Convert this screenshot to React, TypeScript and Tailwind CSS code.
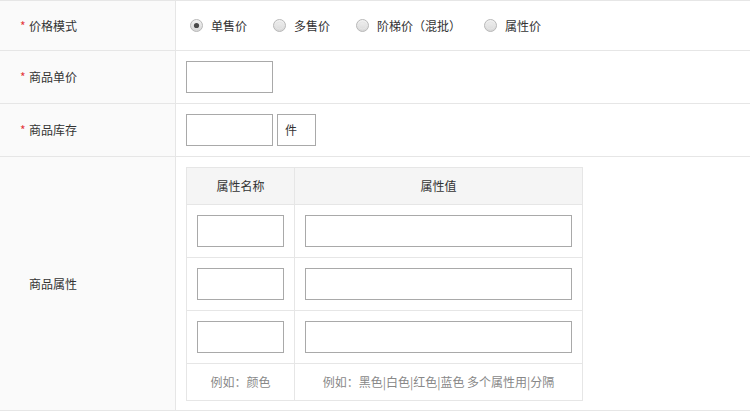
import React from "react";

const FONT = { fontFamily: '"Noto Sans CJK SC", "Liberation Sans", sans-serif' };

function Radio({ checked }: { checked?: boolean }) {
  return (
    <svg width="13" height="13" viewBox="0 0 13 13" className="shrink-0">
      <defs>
        <linearGradient id={checked ? "rgc" : "rgu"} x1="0" y1="0" x2="0" y2="1">
          <stop offset="0" stopColor="#f4f4f4" />
          <stop offset="1" stopColor="#d6d6d6" />
        </linearGradient>
      </defs>
      <circle cx="6.5" cy="6.5" r="6" fill={`url(#${checked ? "rgc" : "rgu"})`} stroke="#b8b8b8" strokeWidth="1" />
      {checked ? (
        <circle cx="6.5" cy="6.5" r="2.6" fill="#4a4a4a" />
      ) : (
        <circle cx="6.5" cy="6.5" r="3.5" fill="none" stroke="#e6e6e6" strokeWidth="1" />
      )}
    </svg>
  );
}

function Label({ text, required }: { text: string; required?: boolean }) {
  return (
    <div className="w-[176px] shrink-0 border-r border-[#e6e6e6] bg-[#fafafa] flex items-center pl-[20px] text-[#333]">
      <span className="inline-block w-[9px] text-[#e4393c] text-[12px] leading-none">{required ? "*" : ""}</span>
      <span>{text}</span>
    </div>
  );
}

function Input({ w }: { w: string }) {
  return <div className={`${w} h-[32px] border border-[#a9a9a9] bg-white`} />;
}

export default function App() {
  const radios = [
    { t: "单售价", c: true, m: "mr-[26px]" },
    { t: "多售价", m: "mr-[26px]" },
    { t: "阶梯价（混批）", m: "mr-[23px]" },
    { t: "属性价", m: "mr-[26px]" },
  ];
  return (
    <div className="w-[750px] h-[415px] bg-white text-[12px] text-[#333] overflow-hidden" style={FONT}>
      <div className="border-t border-[#e6e6e6]">
        <div className="flex h-[50px] border-b border-[#e6e6e6]">
          <Label text="价格模式" required />
          <div className="flex-1 flex items-center pl-[14px]">
            {radios.map((r) => (
              <div key={r.t} className={`flex items-center ${r.m}`}>
                <Radio checked={r.c} />
                <span className="ml-[8px] whitespace-nowrap">{r.t}</span>
              </div>
            ))}
          </div>
        </div>
        <div className="flex h-[53px] border-b border-[#e6e6e6]">
          <Label text="商品单价" required />
          <div className="flex-1 flex items-center pl-[10px]">
            <Input w="w-[87px]" />
          </div>
        </div>
        <div className="flex h-[53px] border-b border-[#e6e6e6]">
          <Label text="商品库存" required />
          <div className="flex-1 flex items-center pl-[10px] gap-[4px]">
            <Input w="w-[87px]" />
            <div className="w-[39px] h-[32px] border border-[#a9a9a9] flex items-center pl-[7px]">件</div>
          </div>
        </div>
        <div className="flex h-[254px] border-b border-[#e6e6e6]">
          <Label text="商品属性" />
          <div className="flex-1 pl-[10px] pt-[10px]">
            <div className="w-[397px] border border-[#e6e6e6]">
              <div className="flex h-[37px] border-b border-[#e6e6e6] bg-[#f5f5f5]">
                <div className="w-[108px] border-r border-[#e6e6e6] flex items-center justify-center">属性名称</div>
                <div className="flex-1 flex items-center justify-center">属性值</div>
              </div>
              {[0, 1, 2].map((i) => (
                <div key={i} className="flex h-[53px] border-b border-[#e6e6e6]">
                  <div className="w-[108px] border-r border-[#e6e6e6] flex items-center pl-[10px]">
                    <Input w="w-[87px]" />
                  </div>
                  <div className="flex-1 flex items-center pl-[10px]">
                    <Input w="w-[267px]" />
                  </div>
                </div>
              ))}
              <div className="flex h-[36px] text-[#888]">
                <div className="w-[108px] border-r border-[#e6e6e6] flex items-center justify-center">例如：颜色</div>
                <div className="flex-1 flex items-center justify-center whitespace-nowrap">例如：黑色|白色|红色|蓝色 多个属性用|分隔</div>
              </div>
            </div>
          </div>
        </div>
      </div>
    </div>
  );
}
